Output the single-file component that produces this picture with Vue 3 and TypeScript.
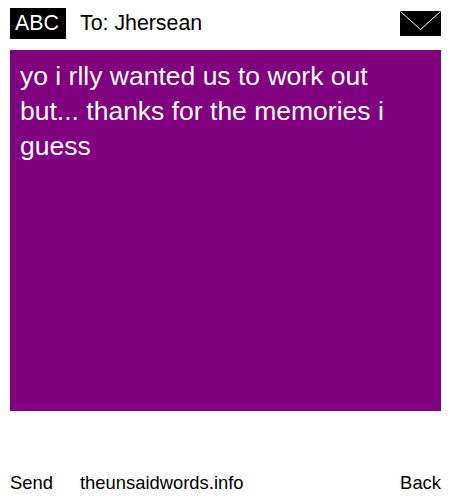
<script setup lang="ts">
const to = 'Jhersean'
const message = 'yo i rlly wanted us to work out but... thanks for the memories i guess'
</script>

<template>
  <div class="phone">
    <header class="top">
      <span class="mode">ABC</span>
      <span class="to">To: {{ to }}</span>
      <svg class="env" width="41" height="25" viewBox="0 0 41 25" aria-hidden="true">
        <rect width="41" height="25" fill="#000" />
        <path d="M0.5 0.5 L20.5 18.5 L40.5 0.5" fill="none" stroke="#fff" stroke-width="1" />
      </svg>
    </header>
    <main class="msg">{{ message }}</main>
    <footer class="bottom">
      <span class="send">Send</span>
      <span class="site">theunsaidwords.info</span>
      <span class="back">Back</span>
    </footer>
  </div>
</template>

<style>
html, body { margin: 0; background: #fff; }
</style>

<style scoped>
.phone {
  width: 450px;
  height: 500px;
  box-sizing: border-box;
  padding: 8px 9px 0 10px;
  display: flex;
  flex-direction: column;
  font-family: "Liberation Sans", Arial, sans-serif;
  color: #000;
}
.top {
  display: flex;
  align-items: center;
  height: 31px;
  margin-bottom: 11px;
}
.mode {
  width: 51px;
  height: 31px;
  padding-left: 5px;
  background: #000;
  color: #fff;
  font-size: 21.33px;
  line-height: 31px;
}
.to {
  margin-left: 14px;
  font-size: 21.33px;
  line-height: 31px;
}
.env {
  margin-left: auto;
  display: block;
}
.msg {
  height: 361px;
  box-sizing: border-box;
  padding: 9px 10px;
  background: #800080;
  color: #fff;
  font-size: 26.5px;
  line-height: 35px;
}
.bottom {
  display: flex;
  margin-top: 60px;
  font-size: 18.4px;
  line-height: 24px;
}
.site {
  margin-left: 27px;
}
.back {
  margin-left: auto;
}
</style>
